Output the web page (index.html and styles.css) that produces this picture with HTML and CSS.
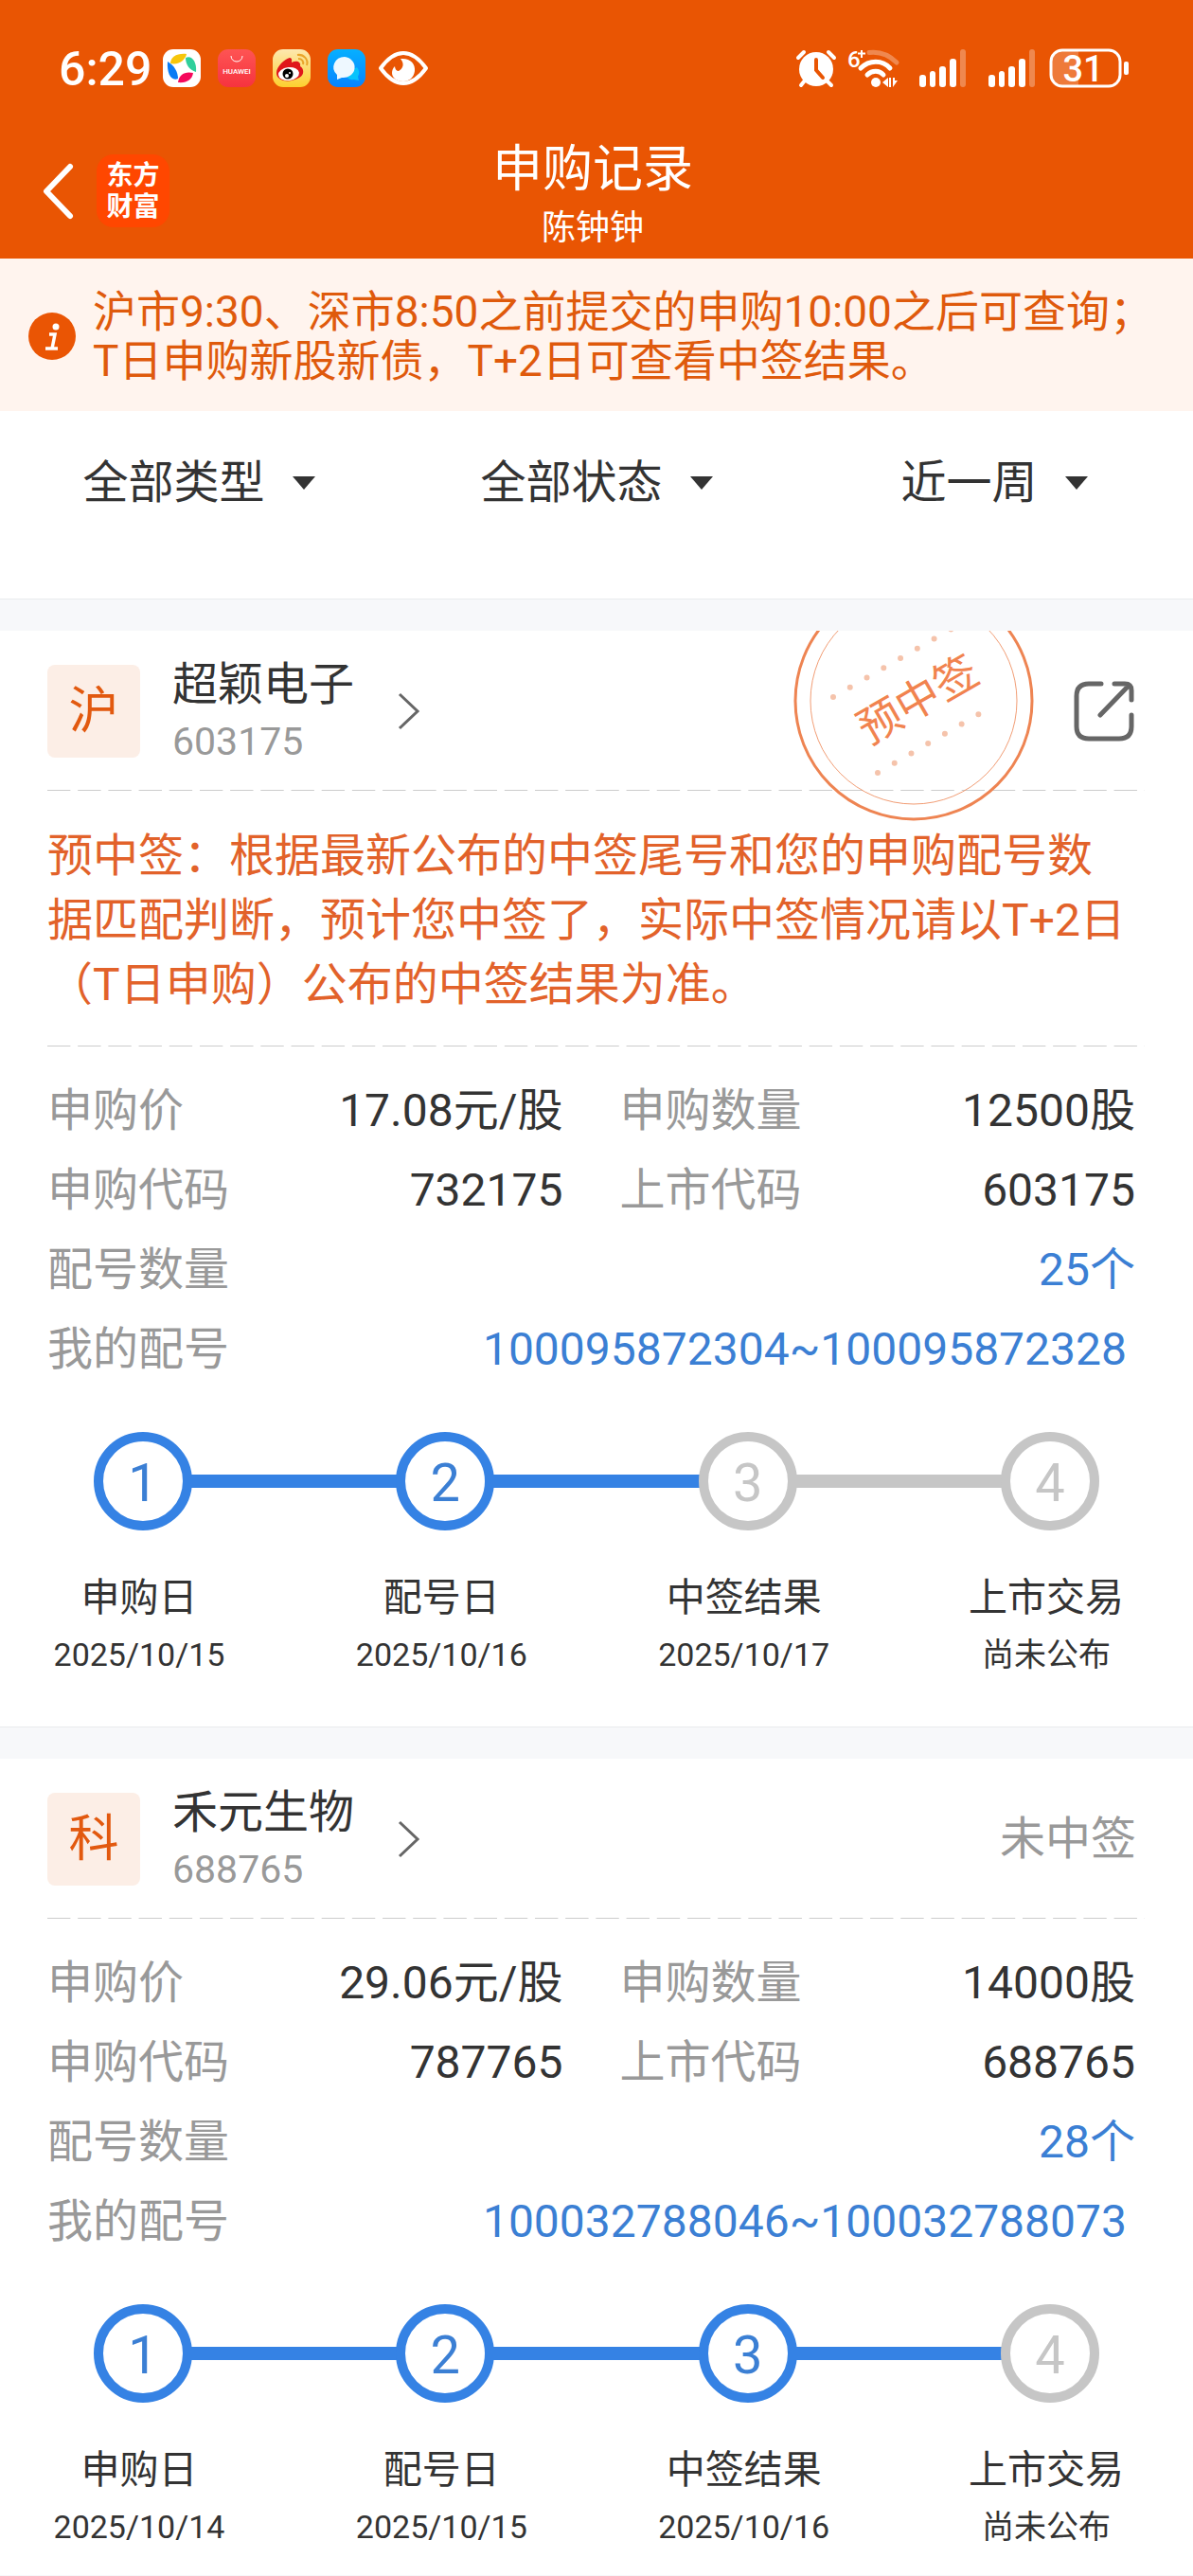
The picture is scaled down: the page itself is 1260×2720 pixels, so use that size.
FILE: index.html
```html
<!DOCTYPE html>
<html lang="zh-CN">
<head>
<meta charset="utf-8">
<meta name="viewport" content="width=device-width, initial-scale=1">
<title>申购记录</title>
<link rel="stylesheet" href="styles.css">
</head>
<body>
<header class="top">
  <div class="status">
    <div class="status-left">
      <span class="clock">6:29</span>
      <svg class="app" viewBox="0 0 40 40" aria-hidden="true">
        <rect width="40" height="40" rx="11" fill="#fff"/>
        <path d="M8 15C8 8 15 4 25 5C24 11 17 17 8 15Z" fill="#f7c60a"/>
        <path d="M24 9C31 6 36 14 35 24C28 22 24 16 24 9Z" fill="#2fcf9b"/>
        <path d="M32 25C31 32 25 36 16 35C17 27 23 23 32 25Z" fill="#f5085c"/>
        <path d="M16 31C9 34 4 26 5 13C12 17 16 24 16 31Z" fill="#0a7cf5"/>
      </svg>
      <svg class="app" viewBox="0 0 40 40" aria-hidden="true">
        <defs><linearGradient id="store" x2="0" y2="1"><stop stop-color="#fe5454"/><stop offset="1" stop-color="#f6333f"/></linearGradient></defs>
        <rect width="40" height="40" rx="11" fill="url(#store)"/>
        <path d="M14 7C14 15 26 15 26 7" fill="none" stroke="#fff" stroke-width="1"/>
        <text class="store-name" x="20" y="26" text-anchor="middle">HUAWEI</text>
      </svg>
      <svg class="app" viewBox="0 0 40 40" aria-hidden="true">
        <defs><linearGradient id="weibo" x2="0" y2="1"><stop stop-color="#fde8b0"/><stop offset="1" stop-color="#fdd02e"/></linearGradient></defs>
        <rect width="40" height="40" rx="11" fill="url(#weibo)"/>
        <path d="M4 25C4 18 13 10 18 9C21 9 20 13 20 14C24 12 30 12 29 18C33 20 34 27 28 30C18 36 4 34 4 25Z" fill="#e0161b"/>
        <ellipse cx="17" cy="26" rx="11" ry="7" fill="#fff" transform="rotate(-6 17 26)"/>
        <circle cx="16" cy="26" r="5.500" fill="#000"/><circle cx="15" cy="28" r="2" fill="#fff"/><circle cx="18" cy="25" r="1" fill="#fff"/>
        <path d="M27 10C31 10 33 13 32 16M26 6C33 5 38 11 36 17" fill="none" stroke="#e9a52b" stroke-width="2"/>
      </svg>
      <svg class="app" viewBox="0 0 40 40" aria-hidden="true">
        <defs><linearGradient id="chat" x2="0" y2="1"><stop stop-color="#06b0ff"/><stop offset="1" stop-color="#0683ff"/></linearGradient></defs>
        <rect width="40" height="40" rx="11" fill="url(#chat)"/>
        <path d="M31 19A8 8 0 0 1 32 29L33 33L28 32C22 33 19 29 20 25Z" fill="#08c3fc"/>
        <path d="M18 8A12 11 0 1 1 15 30L10 32L10 27A12 11 0 0 1 18 8Z" fill="#eef8ff"/>
      </svg>
      <svg class="eye" viewBox="0 0 52 40" aria-hidden="true">
        <path d="M2 20C10 9 18 4 26 4S42 9 50 20C42 31 34 36 26 36S10 31 2 20Z" fill="none" stroke="#fff" stroke-width="4" stroke-linejoin="round"/>
        <path d="M23 10C33 9 39 15 38 23C37 30 32 34 26 34C19 34 14 30 14 25C14 22 15 20 17 18C17 21 19 23 21 23C25 21 28 16 23 10Z" fill="#fff"/>
      </svg>
    </div>
    <div class="status-right">
      <svg class="alarm" viewBox="0 0 42 42" aria-hidden="true">
        <g stroke="#fff" stroke-width="4" stroke-linecap="round"><path d="M2 10L8 4M40 10L34 4M9 34L5 39M32 34L37 39"/></g>
        <circle cx="21" cy="22" r="18" fill="#fff"/>
        <path d="M21 12V23L28 31" fill="none" stroke="#e95503" stroke-width="4" stroke-linecap="round"/>
      </svg>
      <svg class="wifi" viewBox="0 0 56 42" aria-hidden="true">
        <text class="wifi-gen" x="0" y="20">6</text>
        <path d="M11 5.500H19M15 2V10" stroke="#fff" stroke-width="2"/>
        <g fill="none" stroke="#fff" stroke-width="5" stroke-linecap="round">
          <path d="M23 4.500C35 3 45 8 52 15" opacity=".3"/>
          <path d="M14 21C23 12 37 12 45 21"/><path d="M21 28C26 23 34 23 38 28"/>
        </g>
        <circle cx="30" cy="36" r="5" fill="#fff"/>
        <path d="M43 31V41L37 36ZM46 31V41H44V31ZM48 31V41L53 34H50V31Z" fill="#fff"/>
      </svg>
      <svg class="signal" viewBox="0 0 50 42" aria-hidden="true">
        <g fill="#fff"><rect y="28" width="7" height="13" rx="3"/><rect x="11" y="24" width="6" height="17" rx="3"/><rect x="21" y="19" width="7" height="22" rx="3"/><rect x="32" y="11" width="7" height="30" rx="3"/><rect x="43" y="1" width="6" height="40" rx="3" opacity=".3"/></g>
      </svg>
      <svg class="signal signal-last" viewBox="0 0 50 42" aria-hidden="true">
        <g fill="#fff"><rect y="28" width="7" height="13" rx="3"/><rect x="11" y="24" width="6" height="17" rx="3"/><rect x="21" y="19" width="7" height="22" rx="3"/><rect x="32" y="11" width="7" height="30" rx="3"/><rect x="43" y="1" width="6" height="40" rx="3" opacity=".3"/></g>
      </svg>
      <svg class="battery" viewBox="0 0 85 42" aria-label="电量 31">
        <path d="M31 3V39H15Q3 39 3 27V15Q3 3 15 3Z" fill="#fff" opacity=".22"/>
        <rect x="2" y="2" width="73" height="38" rx="12" fill="none" stroke="#fff" stroke-width="3"/>
        <rect x="79" y="14" width="5" height="14" rx="2" fill="#fff"/>
        <text class="battery-level" x="36" y="35" text-anchor="middle">31</text>
      </svg>
    </div>
  </div>
  <div class="titlebar">
    <nav class="nav">
      <button class="back" type="button" aria-label="返回">
        <svg viewBox="0 0 34 60" aria-hidden="true"><path d="M30 4L5 30L30 56" fill="none" stroke="#fff" stroke-width="6" stroke-linecap="round" stroke-linejoin="round"/></svg>
      </button>
      <a class="brand" href="#"><span>东方</span><span>财富</span></a>
    </nav>
    <div class="titles">
      <h1>申购记录</h1>
      <p>陈钟钟</p>
    </div>
  </div>
</header>

<main>
  <section class="notice">
    <svg class="notice-icon" viewBox="0 0 50 50" aria-hidden="true">
      <circle cx="25" cy="25" r="25" fill="#ea5504"/>
      <circle cx="29" cy="15" r="3.500" fill="#fff"/>
      <path d="M22 23H28L25 38M18 38H31" fill="none" stroke="#fff" stroke-width="3.500"/>
    </svg>
    <p>沪市9:30、深市8:50之前提交的申购10:00之后可查询；<br>T日申购新股新债，T+2日可查看中签结果。</p>
  </section>

  <form class="filters">
    <label class="filter"><select aria-label="类型"><option>全部类型</option></select><svg viewBox="0 0 24 14" aria-hidden="true"><path d="M0 0H24L12 14Z"/></svg></label>
    <label class="filter"><select aria-label="状态"><option>全部状态</option></select><svg viewBox="0 0 24 14" aria-hidden="true"><path d="M0 0H24L12 14Z"/></svg></label>
    <label class="filter"><select aria-label="时间"><option>近一周</option></select><svg viewBox="0 0 24 14" aria-hidden="true"><path d="M0 0H24L12 14Z"/></svg></label>
  </form>

  <article class="card">
    <svg class="stamp" viewBox="0 0 254 254" role="img" aria-label="预中签">
      <g fill="none" stroke="#ee8452"><circle cx="127" cy="127" r="125" stroke-width="3"/><circle cx="127" cy="127" r="109" stroke-width="1" opacity=".8"/></g>
      <g class="stamp-dots">
        <path d="M42 123L167 51"/><path d="M89 203L213 131"/>
      </g>
      <text class="stamp-text" transform="translate(131 125) rotate(-30)" text-anchor="middle" y="17">预中签</text>
    </svg>
    <div class="card-head">
      <span class="badge">沪</span>
      <a class="stock" href="#">
        <span class="stock-text"><strong>超颖电子</strong><small>603175</small></span>
        <svg class="chevron" viewBox="0 0 24 40" aria-hidden="true"><path d="M2 2L21 20L2 38"/></svg>
      </a>
      <button class="share" type="button" aria-label="分享">
        <svg viewBox="0 0 64 64" aria-hidden="true"><path d="M29 3H16Q3 3 3 16V48Q3 61 16 61H48Q61 61 61 48V36M61 20V10Q61 3 54 3H43M28 36L58 5"/></svg>
      </button>
    </div>
    <p class="message">预中签：根据最新公布的中签尾号和您的申购配号数据匹配判断，预计您中签了，实际中签情况请以T+2日（T日申购）公布的中签结果为准。</p>
    <dl class="facts">
      <div><dt>申购价</dt><dd>17.08元/股</dd></div>
      <div><dt>申购数量</dt><dd>12500股</dd></div>
      <div><dt>申购代码</dt><dd>732175</dd></div>
      <div><dt>上市代码</dt><dd>603175</dd></div>
      <div class="wide"><dt>配号数量</dt><dd><a href="#">25个</a></dd></div>
      <div class="wide numbers"><dt>我的配号</dt><dd><a href="#">100095872304~100095872328</a></dd></div>
    </dl>
    <div class="track">
      <span class="dot">1</span><i class="bar"></i><span class="dot">2</span><i class="bar"></i><span class="dot todo">3</span><i class="bar todo"></i><span class="dot todo">4</span>
    </div>
    <ol class="stages">
      <li><b>申购日</b><time>2025/10/15</time></li>
      <li><b>配号日</b><time>2025/10/16</time></li>
      <li><b>中签结果</b><time>2025/10/17</time></li>
      <li><b>上市交易</b><span>尚未公布</span></li>
    </ol>
  </article>

  <article class="card">
    <div class="card-head">
      <span class="badge">科</span>
      <a class="stock" href="#">
        <span class="stock-text"><strong>禾元生物</strong><small>688765</small></span>
        <svg class="chevron" viewBox="0 0 24 40" aria-hidden="true"><path d="M2 2L21 20L2 38"/></svg>
      </a>
      <span class="result">未中签</span>
    </div>
    <dl class="facts">
      <div><dt>申购价</dt><dd>29.06元/股</dd></div>
      <div><dt>申购数量</dt><dd>14000股</dd></div>
      <div><dt>申购代码</dt><dd>787765</dd></div>
      <div><dt>上市代码</dt><dd>688765</dd></div>
      <div class="wide"><dt>配号数量</dt><dd><a href="#">28个</a></dd></div>
      <div class="wide numbers"><dt>我的配号</dt><dd><a href="#">100032788046~100032788073</a></dd></div>
    </dl>
    <div class="track">
      <span class="dot">1</span><i class="bar"></i><span class="dot">2</span><i class="bar"></i><span class="dot">3</span><i class="bar"></i><span class="dot todo">4</span>
    </div>
    <ol class="stages">
      <li><b>申购日</b><time>2025/10/14</time></li>
      <li><b>配号日</b><time>2025/10/15</time></li>
      <li><b>中签结果</b><time>2025/10/16</time></li>
      <li><b>上市交易</b><span>尚未公布</span></li>
    </ol>
  </article>
</main>
</body>
</html>
```
FILE: styles.css
```css
* { box-sizing: border-box; margin: 0; padding: 0; }

body {
  background: #f7f8fa;
  color: #333;
  font: 48px/60px Roboto, "Noto Sans CJK SC", sans-serif;
}

a { color: inherit; text-decoration: none; }
svg { display: block; flex: none; overflow: visible; }
button { border: 0; background: none; font: inherit; color: inherit; }

/* Header */
.top { background: #e95503; color: #fff; }

.status {
  display: flex;
  justify-content: space-between;
  align-items: center;
  height: 144px;
  padding: 0 67px 0 62px;
}
.status-left { display: flex; align-items: center; gap: 18px; }
.status-right { display: flex; align-items: center; }
.clock { width: 92px; padding-top: 2px; font-size: 50px; font-weight: 500; white-space: nowrap; }
.app { width: 40px; height: 40px; }
.store-name { font: 500 8px Roboto, sans-serif; fill: #fff; }
.eye { width: 52px; height: 40px; margin-left: -4px; }
.alarm { width: 42px; height: 42px; margin-right: 12px; }
.wifi { width: 56px; height: 42px; margin-right: 20px; }
.wifi-gen { font: 500 24px Roboto, sans-serif; fill: #fff; }
.signal { width: 50px; height: 42px; margin-right: 23px; }
.signal-last { margin-right: 14px; }
.battery { width: 85px; height: 42px; }
.battery-level { font: 500 38px Roboto, sans-serif; fill: #fff; }

.titlebar {
  display: grid;
  grid-template-columns: 1fr auto 1fr;
  align-items: start;
  padding: 2px 8px 3px 0;
}
.nav { display: flex; align-items: center; gap: 22px; padding: 17px 0 0 44px; }
.back { width: 36px; height: 60px; }
.back svg { width: 34px; height: 60px; }
.brand {
  display: grid;
  align-content: center;
  width: 77px;
  height: 77px;
  border-radius: 18px;
  background: #ff4700;
  font: 700 28px/33px "Liberation Sans", "Noto Sans CJK SC", sans-serif;
  text-align: center;
}
.titles { text-align: center; }
.titles h1 { font-size: 53px; font-weight: 400; line-height: 66px; }
.titles p { font-size: 36px; line-height: 58px; }

/* Notice */
.notice {
  display: flex;
  align-items: center;
  gap: 18px;
  padding: 30px 30px 27px;
  background: #fff4ee;
  color: #df5a0c;
  font-size: 46px;
  line-height: 52px;
}
.notice p { white-space: nowrap; }
.notice-icon { width: 50px; height: 50px; }

/* Filters */
.filters {
  display: grid;
  grid-template-columns: repeat(3, 1fr);
  padding-bottom: 46px;
  border-bottom: 1px solid #e9ebed;
  background: #fff;
}
.filter { display: flex; justify-content: center; align-items: center; gap: 28px; height: 152px; }
.filter select {
  appearance: none;
  border: 0;
  background: none;
  color: #333;
  font: 48px/60px Roboto, "Noto Sans CJK SC", sans-serif;
}
.filter svg { width: 24px; height: 14px; fill: #333; }

/* Record card */
.card {
  position: relative;
  margin-top: 33px;
  padding-bottom: 46px;
  border-bottom: 1px solid #e9ebed;
  background: #fff;
  overflow: hidden;
}
.card:last-child { padding-bottom: 21px; border-bottom: 0; }

.card-head, .message {
  margin: 0 51px 0 50px;
  background: linear-gradient(90deg, #ccc 75%, transparent 75%) left bottom / 32px 1px;
  background-repeat: round no-repeat;
}
.card-head { display: flex; align-items: center; height: 169px; padding-right: 9px; }
.badge {
  width: 98px;
  height: 98px;
  border-radius: 8px;
  background: #fceee6;
  color: #e2590f;
  font-size: 53px;
  line-height: 98px;
  text-align: center;
}
.stock { display: flex; align-items: center; gap: 46px; margin-left: 34px; }
.stock-text { display: grid; padding-top: 4px; }
.stock strong { font-weight: 400; }
.stock small { color: #999; font-size: 41px; }
.chevron { width: 24px; height: 40px; fill: none; stroke: #666; stroke-width: 3; }
.share { margin: 0 2px 0 auto; }
.share svg { width: 64px; height: 64px; fill: none; stroke: #666; stroke-width: 5; stroke-linecap: round; stroke-linejoin: round; }
.result { margin-left: auto; color: #999; }

/* Seal laid over the card head and clipped by the card edge */
.stamp { position: absolute; top: -53px; right: 168px; width: 254px; height: 254px; pointer-events: none; }
.stamp-dots { fill: none; stroke: #f5c3ab; stroke-width: 6; stroke-linecap: round; stroke-dasharray: 0 20.500; }
.stamp-text { font: 46px "Noto Sans CJK SC", sans-serif; fill: #f1834f; }

.message { padding: 35px 9px 31px 0; color: #e2622a; line-height: 68px; }

.facts {
  display: grid;
  grid-template-columns: 1fr 1fr;
  column-gap: 60px;
  margin: 0 61px 0 50px;
  padding-top: 26px;
  line-height: 84px;
}
.facts div { display: flex; justify-content: space-between; }
.facts .wide { grid-column: 1 / -1; }
.facts .numbers { padding-right: 9px; }
.facts dt { color: #999; }
.facts a { color: #3b7fd4; }

/* Progress */
.track { display: flex; align-items: center; padding: 45px 99px 0; }
.dot {
  width: 104px;
  height: 104px;
  border: 10px solid #3582e4;
  border-radius: 50%;
  color: #3b7fd4;
  font-size: 56px;
  line-height: 88px;
  text-align: center;
}
.bar { flex: 1; height: 14px; margin: 0 -2px; background: #3582e4; }
.dot.todo { border-color: #c6c6c6; color: #c6c6c6; }
.bar.todo { background: #c6c6c6; }

.stages { display: flex; justify-content: space-between; padding: 41px 55px 0 47px; list-style: none; }
.stages li { display: grid; width: 200px; text-align: center; }
.stages b { font-size: 41px; font-weight: 400; }
.stages time, .stages span { font-size: 34px; }
```
